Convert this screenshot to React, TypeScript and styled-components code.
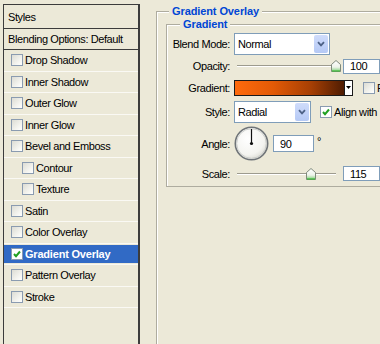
import styled, { createGlobalStyle } from "styled-components";

const GlobalStyle = createGlobalStyle`
  html, body {
    margin: 0;
    padding: 0;
    background: #ece9d8;
  }
  body {
    font-family: "Liberation Sans", Arial, sans-serif;
    font-size: 11px;
    color: #000;
  }
`;

const Dialog = styled.div`
  width: 380px;
  height: 344px;
  overflow: hidden;
  display: flex;
  align-items: flex-start;
  background: #ece9d8;
  letter-spacing: -0.4px;
`;

/* ---------- left: styles list ---------- */

const StyleList = styled.ul`
  list-style: none;
  margin: 4px 0 0 3px;
  padding: 0;
  width: 137px;
  height: 360px;
  box-sizing: border-box;
  flex-shrink: 0;
  border: 1px solid #3c3c3c;
  border-right-width: 2px;
  background: #ece9d8;
`;

const HeadItem = styled.li<{ $h: number }>`
  height: ${({ $h }) => $h}px;
  box-sizing: border-box;
  display: flex;
  align-items: center;
  padding-left: 4px;
  border-bottom: 1px solid #3c3c3c;
`;

const StyleItem = styled.li`
  height: 21.5px;
  box-sizing: border-box;
  display: flex;
  align-items: center;
  border-bottom: 1px solid #faf9f4;
`;

const ItemBody = styled.div<{ $indent?: boolean; $selected?: boolean }>`
  flex: 1;
  height: 18px;
  display: flex;
  align-items: center;
  gap: 2px;
  padding-left: ${({ $indent }) => ($indent ? 18 : 7)}px;
  background: ${({ $selected }) => ($selected ? "#316ac5" : "transparent")};
  color: ${({ $selected }) => ($selected ? "#fff" : "#000")};
  font-weight: ${({ $selected }) => ($selected ? "bold" : "normal")};
  letter-spacing: ${({ $selected }) => ($selected ? "-0.2px" : "-0.4px")};
`;

const Box = styled.span<{ $checked?: boolean }>`
  width: 12px;
  height: 12px;
  box-sizing: border-box;
  flex-shrink: 0;
  border: 1px solid #8a9bb0;
  background: ${({ $checked }) =>
    $checked ? "#fff" : "linear-gradient(135deg, #dcdcd4 0%, #f6f6f2 70%, #fff 100%)"};
  display: flex;
  align-items: center;
  justify-content: center;
`;

const CheckMark = () => (
  <svg width="8" height="8" viewBox="0 0 8 8">
    <path d="M1 4 L3 6.2 L7 1.5" fill="none" stroke="#21a121" strokeWidth="2" />
  </svg>
);

const Checkbox = ({ checked }: { checked?: boolean }) => (
  <Box $checked={checked}>{checked && <CheckMark />}</Box>
);

const effects: { name: string; indent?: boolean; checked?: boolean }[] = [
  { name: "Drop Shadow" },
  { name: "Inner Shadow" },
  { name: "Outer Glow" },
  { name: "Inner Glow" },
  { name: "Bevel and Emboss" },
  { name: "Contour", indent: true },
  { name: "Texture", indent: true },
  { name: "Satin" },
  { name: "Color Overlay" },
  { name: "Gradient Overlay", checked: true },
  { name: "Pattern Overlay" },
  { name: "Stroke" },
];

/* ---------- right: settings ---------- */

const Settings = styled.div`
  margin-left: 16px;
  width: 270px;
  flex-shrink: 0;
`;

const Group = styled.fieldset<{ $outer?: boolean }>`
  margin: ${({ $outer }) => ($outer ? "4px 0 0 0" : "0")};
  padding: ${({ $outer }) => ($outer ? "0 0 0 9px" : "3px 0 0 5px")};
  min-width: 0;
  height: ${({ $outer }) => ($outer ? "360px" : "auto")};
  border: 1px solid #aeac9f;
  box-shadow: inset 1px 1px 0 #fff;
`;

const GroupTitle = styled.legend<{ $offset: number; $lh: number }>`
  margin-left: ${({ $offset }) => $offset}px;
  padding: 0 3px;
  line-height: ${({ $lh }) => $lh}px;
  background: #ece9d8;
  color: #0046d5;
  font-weight: bold;
  letter-spacing: -0.1px;
`;

const Row = styled.div<{ $h: number }>`
  height: ${({ $h }) => $h}px;
  display: grid;
  grid-template-columns: 58px auto;
  column-gap: 4px;
  align-items: center;
`;

const FieldLabel = styled.span`
  text-align: right;
`;

const Controls = styled.div`
  display: flex;
  align-items: center;
`;

const Combo = styled.div<{ $w: number }>`
  width: ${({ $w }) => $w}px;
  height: 22px;
  box-sizing: border-box;
  border: 1px solid #7f9db9;
  background: #fff;
  display: flex;
  align-items: center;
  padding-left: 3px;
`;

const ComboText = styled.span`
  flex: 1;
`;

const ComboButton = styled.span`
  width: 14px;
  height: 18px;
  margin-right: 1px;
  border-radius: 2px;
  background: linear-gradient(180deg, #d0dcfb 0%, #b5c9f5 100%);
  display: flex;
  align-items: center;
  justify-content: center;
`;

const Chevron = () => (
  <svg width="8" height="6" viewBox="0 0 8 6">
    <path d="M1 1.2 L4 4.4 L7 1.2" fill="none" stroke="#4d6185" strokeWidth="1.8" />
  </svg>
);

const Slider = styled.div`
  position: relative;
  width: 109px;
  height: 14px;
  flex-shrink: 0;

  &::before {
    content: "";
    position: absolute;
    left: 3px;
    top: 6px;
    width: 99px;
    height: 1px;
    background: #9d9b8e;
    border-bottom: 1px solid #fff;
  }
`;

const Thumb = styled.svg`
  position: absolute;
  top: 1px;
`;

const SliderControl = ({ pct }: { pct: number }) => (
  <Slider>
    <Thumb width="10" height="12" viewBox="0 0 10 12" style={{ left: 3 + pct * 99 - 5 }}>
      <defs>
        <linearGradient id={`tg${pct}`} x1="0" y1="0" x2="0" y2="1">
          <stop offset="0" stopColor="#ffffff" />
          <stop offset="0.6" stopColor="#eef3ea" />
          <stop offset="1" stopColor="#7fd07a" />
        </linearGradient>
      </defs>
      <path
        d="M5 0.5 L9.5 4.5 L9.5 11.5 L0.5 11.5 L0.5 4.5 Z"
        fill={`url(#tg${pct})`}
        stroke="#7f8a7c"
        strokeWidth="1"
      />
      <path d="M1 11 L9 11" stroke="#3fb83a" strokeWidth="1.2" />
    </Thumb>
  </Slider>
);

const NumberBox = styled.span<{ $w: number; $h: number }>`
  width: ${({ $w }) => $w}px;
  height: ${({ $h }) => $h}px;
  box-sizing: border-box;
  flex-shrink: 0;
  border: 1px solid #7f9db9;
  background: #fff;
  padding-left: 6px;
  display: flex;
  align-items: center;
`;

const GradientSwatch = styled.span`
  width: 111px;
  height: 16px;
  box-sizing: border-box;
  border: 1px solid #1a1a1a;
  background: linear-gradient(90deg, #ff6a0c 0%, #e25a06 35%, #a63f04 70%, #4e1c02 100%);
`;

const SwatchArrow = styled.span`
  width: 8px;
  height: 16px;
  box-sizing: border-box;
  border: 1px solid #1a1a1a;
  border-left: none;
  background: #fff;
  display: flex;
  align-items: center;
  justify-content: center;
`;

const Option = styled.label<{ $ml: number }>`
  margin-left: ${({ $ml }) => $ml}px;
  display: flex;
  align-items: center;
  gap: 2px;
  white-space: nowrap;
`;

const Degree = styled.span`
  align-self: flex-start;
  margin: 9px 0 0 3px;
`;

const AngleDial = () => (
  <svg width="35" height="35" viewBox="0 0 35 35">
    <defs>
      <radialGradient id="dial" cx="0.4" cy="0.35" r="0.7">
        <stop offset="0" stopColor="#ffffff" />
        <stop offset="0.7" stopColor="#f4f4f0" />
        <stop offset="1" stopColor="#d8d8d0" />
      </radialGradient>
    </defs>
    <circle cx="17.5" cy="17.5" r="16.2" fill="url(#dial)" stroke="#6f7478" strokeWidth="1.6" />
    <circle cx="17.5" cy="17.5" r="14.8" fill="none" stroke="#c4c6c4" strokeWidth="0.8" />
    <path d="M17.5 17.5 L17.5 3" stroke="#111" strokeWidth="1.2" />
    <circle cx="17.5" cy="17.5" r="1.6" fill="#111" />
  </svg>
);

export default function App() {
  return (
    <>
      <GlobalStyle />
      <Dialog>
        <StyleList>
          <HeadItem $h={24}>Styles</HeadItem>
          <HeadItem $h={21}>Blending Options: Default</HeadItem>
          {effects.map((e) => (
            <StyleItem key={e.name}>
              <ItemBody $indent={e.indent} $selected={e.checked}>
                <Checkbox checked={e.checked} />
                {e.name}
              </ItemBody>
            </StyleItem>
          ))}
        </StyleList>

        <Settings>
          <Group $outer>
            <GroupTitle $offset={3} $lh={14}>Gradient Overlay</GroupTitle>
            <Group>
              <GroupTitle $offset={8} $lh={12}>Gradient</GroupTitle>

              <Row $h={22}>
                <FieldLabel>Blend Mode:</FieldLabel>
                <Controls>
                  <Combo $w={96}>
                    <ComboText>Normal</ComboText>
                    <ComboButton>
                      <Chevron />
                    </ComboButton>
                  </Combo>
                </Controls>
              </Row>

              <Row $h={22}>
                <FieldLabel>Opacity:</FieldLabel>
                <Controls>
                  <SliderControl pct={1} />
                  <NumberBox $w={37} $h={15}>100</NumberBox>
                </Controls>
              </Row>

              <Row $h={21}>
                <FieldLabel>Gradient:</FieldLabel>
                <Controls>
                  <GradientSwatch />
                  <SwatchArrow>
                    <svg width="5" height="3" viewBox="0 0 5 3">
                      <path d="M0 0 L5 0 L2.5 3 Z" fill="#000" />
                    </svg>
                  </SwatchArrow>
                  <Option $ml={10}>
                    <Checkbox />
                    Reverse
                  </Option>
                </Controls>
              </Row>

              <Row $h={28}>
                <FieldLabel>Style:</FieldLabel>
                <Controls>
                  <Combo $w={77}>
                    <ComboText>Radial</ComboText>
                    <ComboButton>
                      <Chevron />
                    </ComboButton>
                  </Combo>
                  <Option $ml={9}>
                    <Checkbox checked />
                    Align with Layer
                  </Option>
                </Controls>
              </Row>

              <Row $h={35}>
                <FieldLabel>Angle:</FieldLabel>
                <Controls>
                  <AngleDial />
                  <NumberBox $w={41} $h={17} style={{ marginLeft: 4 }}>
                    90
                  </NumberBox>
                  <Degree>°</Degree>
                </Controls>
              </Row>

              <Row $h={25}>
                <FieldLabel>Scale:</FieldLabel>
                <Controls>
                  <SliderControl pct={0.75} />
                  <NumberBox $w={37} $h={15}>115</NumberBox>
                </Controls>
              </Row>
            </Group>
          </Group>
        </Settings>
      </Dialog>
    </>
  );
}
